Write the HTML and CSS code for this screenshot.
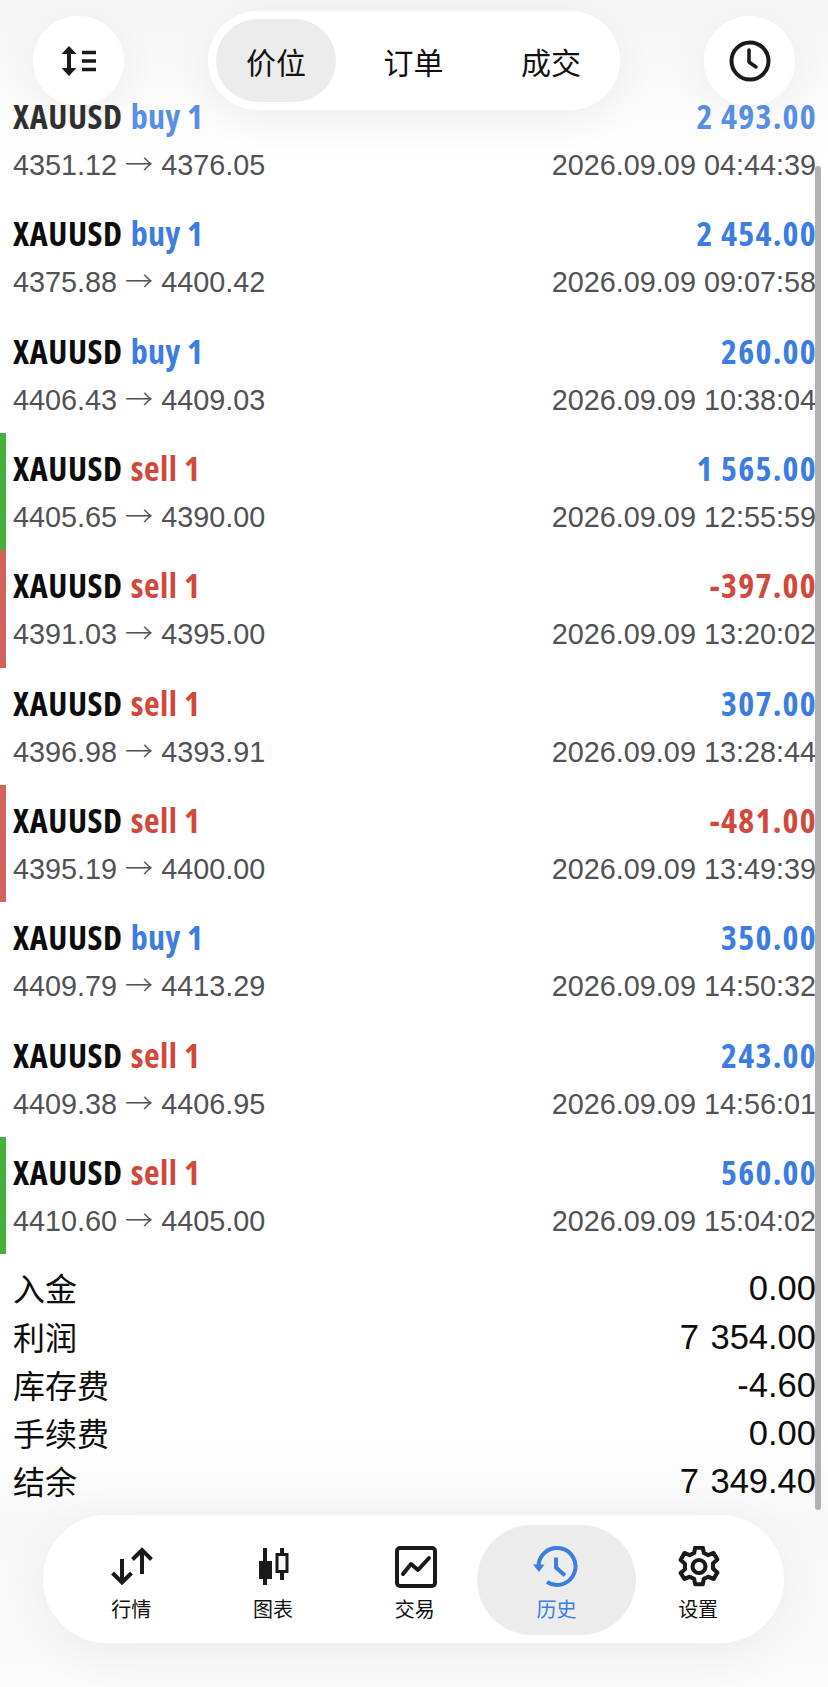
FILE: index.html
```html
<!DOCTYPE html>
<html lang="zh">
<head>
<meta charset="utf-8">
<title>历史</title>
<link rel="stylesheet" href="styles.css">
</head>
<body>
<div class="app">
  <header class="topbar">
    <button class="round">
      <svg class="ic-sort" viewBox="0 0 36 32"><path d="M8 1l7.500 8H10v14h5.500L8 31 .5 23H6V9H.5z" fill="#1a1a1a"/><path d="M21 7.500h14M21 16h14M21 24.500h14" stroke="#1a1a1a" stroke-width="3.500" fill="none"/></svg>
    </button>
    <nav class="seg">
      <span class="seg-item on">价位</span>
      <span class="seg-item">订单</span>
      <span class="seg-item">成交</span>
    </nav>
    <button class="round">
      <svg class="ic-clock" viewBox="0 0 42 42"><circle cx="21" cy="21" r="18.500" fill="none" stroke="#1a1a1a" stroke-width="4"/><path d="M20 10v12l7 5" fill="none" stroke="#1a1a1a" stroke-width="3.500" stroke-linecap="round" stroke-linejoin="round"/></svg>
    </button>
  </header>

  <main class="list">
    <div class="row">
      <div class="l1"><span class="sym">XAUUSD</span><span class="buy">buy 1</span><span class="pnl pos">2 493.00</span></div>
      <div class="l2"><span>4351.12 <span class="arr">→</span> 4376.05</span><span>2026.09.09 04:44:39</span></div>
    </div>
    <div class="row">
      <div class="l1"><span class="sym">XAUUSD</span><span class="buy">buy 1</span><span class="pnl pos">2 454.00</span></div>
      <div class="l2"><span>4375.88 <span class="arr">→</span> 4400.42</span><span>2026.09.09 09:07:58</span></div>
    </div>
    <div class="row">
      <div class="l1"><span class="sym">XAUUSD</span><span class="buy">buy 1</span><span class="pnl pos">260.00</span></div>
      <div class="l2"><span>4406.43 <span class="arr">→</span> 4409.03</span><span>2026.09.09 10:38:04</span></div>
    </div>
    <div class="row tp">
      <div class="l1"><span class="sym">XAUUSD</span><span class="sell">sell 1</span><span class="pnl pos">1 565.00</span></div>
      <div class="l2"><span>4405.65 <span class="arr">→</span> 4390.00</span><span>2026.09.09 12:55:59</span></div>
    </div>
    <div class="row sl">
      <div class="l1"><span class="sym">XAUUSD</span><span class="sell">sell 1</span><span class="pnl neg">-397.00</span></div>
      <div class="l2"><span>4391.03 <span class="arr">→</span> 4395.00</span><span>2026.09.09 13:20:02</span></div>
    </div>
    <div class="row">
      <div class="l1"><span class="sym">XAUUSD</span><span class="sell">sell 1</span><span class="pnl pos">307.00</span></div>
      <div class="l2"><span>4396.98 <span class="arr">→</span> 4393.91</span><span>2026.09.09 13:28:44</span></div>
    </div>
    <div class="row sl">
      <div class="l1"><span class="sym">XAUUSD</span><span class="sell">sell 1</span><span class="pnl neg">-481.00</span></div>
      <div class="l2"><span>4395.19 <span class="arr">→</span> 4400.00</span><span>2026.09.09 13:49:39</span></div>
    </div>
    <div class="row">
      <div class="l1"><span class="sym">XAUUSD</span><span class="buy">buy 1</span><span class="pnl pos">350.00</span></div>
      <div class="l2"><span>4409.79 <span class="arr">→</span> 4413.29</span><span>2026.09.09 14:50:32</span></div>
    </div>
    <div class="row">
      <div class="l1"><span class="sym">XAUUSD</span><span class="sell">sell 1</span><span class="pnl pos">243.00</span></div>
      <div class="l2"><span>4409.38 <span class="arr">→</span> 4406.95</span><span>2026.09.09 14:56:01</span></div>
    </div>
    <div class="row tp">
      <div class="l1"><span class="sym">XAUUSD</span><span class="sell">sell 1</span><span class="pnl pos">560.00</span></div>
      <div class="l2"><span>4410.60 <span class="arr">→</span> 4405.00</span><span>2026.09.09 15:04:02</span></div>
    </div>
    <section class="summary">
      <div class="sum"><span class="lab">入金</span><span>0.00</span></div>
      <div class="sum"><span class="lab">利润</span><span>7 354.00</span></div>
      <div class="sum"><span class="lab">库存费</span><span>-4.60</span></div>
      <div class="sum"><span class="lab">手续费</span><span>0.00</span></div>
      <div class="sum"><span class="lab">结余</span><span>7 349.40</span></div>
    </section>
  </main>

  <div class="scrollbar"></div>

  <nav class="tabs">
    <div class="tab">
      <svg class="ti" viewBox="0 0 46 42"><path d="M14 13v24M4.500 27l9.500 9.500 9.500-9.500M34 28V4M24.500 13.500L34 4l9.500 9.500" fill="none" stroke="#1a1a1a" stroke-width="4"/></svg>
      <span>行情</span>
    </div>
    <div class="tab">
      <svg class="ti" viewBox="0 0 46 42"><path d="M13 2h4v13h5v18h-5v6h-4v-6H9V15h4z" fill="#1a1a1a"/><path d="M30 2h4v5h4.500v20H34v7h-4v-7h-4.500V7H30zM28.500 10v14h7V10z" fill="#1a1a1a" fill-rule="evenodd"/></svg>
      <span>图表</span>
    </div>
    <div class="tab">
      <svg class="ti" viewBox="0 0 46 42"><rect x="5" y="2" width="38" height="38" rx="3" fill="none" stroke="#1a1a1a" stroke-width="4"/><path d="M11 28l8-10 7 6 11-12" fill="none" stroke="#1a1a1a" stroke-width="4" stroke-linecap="round" stroke-linejoin="round"/></svg>
      <span>交易</span>
    </div>
    <div class="tab on">
      <svg class="ti" viewBox="0 0 46 42"><path d="M5.500 20.500A18.500 18.500 0 1 1 14 36" fill="none" stroke="#3b7de0" stroke-width="4"/><path d="M0 18.500h11.500L6 26z" fill="#3b7de0"/><path d="M23 11.500v10l9 8" fill="none" stroke="#3b7de0" stroke-width="4"/></svg>
      <span>历史</span>
    </div>
    <div class="tab">
      <svg class="ti" viewBox="0 0 46 42"><g transform="translate(24 20.500) scale(1.080) translate(-21 -20.500)"><path d="M17.500 3h7l1 5 4 2 5-2 3.500 6-4 3.500v5l4 3.500-3.500 6-5-2-4 2-1 5h-7l-1-5-4-2-5 2L4 26.500l4-3.500v-5l-4-3.500L7.500 8l5 2 4-2z" fill="none" stroke="#1a1a1a" stroke-width="3.800" stroke-linejoin="round"/><circle cx="21" cy="20.500" r="6" fill="none" stroke="#1a1a1a" stroke-width="3.800"/></g></svg>
      <span>设置</span>
    </div>
  </nav>
</div>
</body>
</html>
```
FILE: styles.css
```css
* { box-sizing: border-box; }
html, body { margin: 0; padding: 0; }
body { background: #fff; font-family: "Liberation Sans", "Noto Sans CJK SC", sans-serif; }
.app {
  position: relative; width: 828px; height: 1687px; overflow: hidden;
  display: flex; flex-direction: column;
  background: linear-gradient(#f6f6f6 0, #f9f9f9 80px, #ffffff 160px, #ffffff 1440px, #f8f8f8 1520px, #fafafa 1687px);
}
.topbar {
  position: absolute; top: 11px; left: 33px; right: 33px; height: 99px;
  display: flex; justify-content: space-between; align-items: center;
}
.round {
  width: 91px; height: 90px; border: 0; padding: 0; border-radius: 50%; background: #fff;
  display: flex; align-items: center; justify-content: center;
  box-shadow: 0 6px 40px rgba(0,0,0,.05);
}
.ic-sort { width: 36px; height: 32px; }
.ic-clock { width: 42px; height: 42px; }
.seg {
  width: 412px; height: 99px; border-radius: 50px; background: #fff; padding: 8px;
  display: flex; gap: 17.500px; box-shadow: 0 8px 40px rgba(0,0,0,.06);
}
.seg-item {
  width: 120px; flex: none; border-radius: 42px; display: flex; align-items: center; justify-content: center;
  font: 30px "Noto Sans CJK SC", sans-serif; color: #111;
}
.seg-item.on { background: #ececec; }
.list { padding-top: 81px; flex: 1; }
.row { height: 117.330px; padding: 0 12px 0 13px; display: flex; flex-direction: column; }
.row:first-child .l1 { opacity: .85; }
.row.tp { box-shadow: inset 6px 0 0 #46b03e; }
.row.sl { box-shadow: inset 6px 0 0 #d2635a; }
.l1 {
  display: flex; align-items: baseline; margin-top: 13px; height: 44px; line-height: 44px;
  font-family: "Open Sans", "Liberation Sans", sans-serif; font-stretch: 75%; font-weight: 700; font-size: 34px;
}
.sym { color: #0c0c0c; margin-right: 8px; letter-spacing: .6px; }
.buy { color: #3b7de0; letter-spacing: .3px; }
.sell { color: #cf4a3c; letter-spacing: .5px; }
.pnl { margin-left: auto; margin-right: -1px; letter-spacing: 1.250px; }
.pos { color: #3b7de0; }
.neg { color: #cf4a3c; }
.l2 {
  display: flex; justify-content: space-between; height: 44px; line-height: 44px; margin-top: 5px;
  font-size: 28.800px; color: #515254;
}
.arr { font-family: "Noto Sans CJK SC", sans-serif; font-weight: 300; font-size: 28px; line-height: 1; }
.summary { padding: 9px 12px 0 13px; }
.sum {
  display: flex; justify-content: space-between; height: 48.300px; line-height: 50.300px;
  font-size: 34.500px; word-spacing: 2px; color: #0d0d0d;
}
.lab { font: 32px/48.300px "Noto Sans CJK SC", sans-serif; }
.scrollbar {
  position: absolute; right: 7px; top: 166px; width: 6px; height: 1344px;
  background: #b2b2b2; border-radius: 3px;
}
.tabs {
  position: absolute; left: 43px; top: 1515px; width: 741px; height: 128px;
  border-radius: 64px; background: #fff; padding: 10px 0 8px 17.500px;
  display: flex; box-shadow: 0 8px 50px rgba(0,0,0,.06);
}
.tab {
  width: 141.700px; flex: none; display: flex; flex-direction: column; align-items: center; padding-top: 20.500px;
  font: 20px/28px "Noto Sans CJK SC", sans-serif; color: #111; border-radius: 55px; gap: 7.500px;
}
.tab.on { width: 159px; margin: 0 -8.650px; background: #ececec; color: #3b7de0; }
.ti { height: 42px; width: 46px; }
```
